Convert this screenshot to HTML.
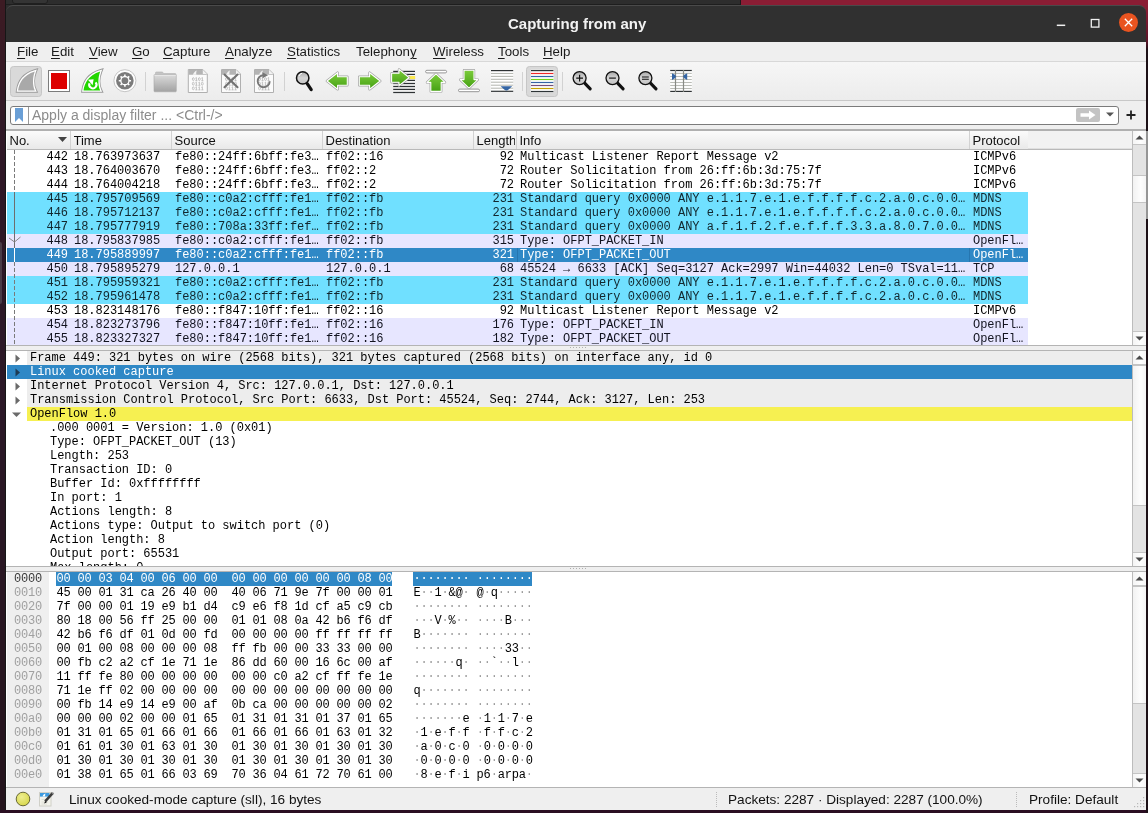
<!DOCTYPE html><html><head><meta charset="utf-8"><style>
*{margin:0;padding:0;box-sizing:border-box}
html,body{width:1148px;height:813px;overflow:hidden;background:#2a1420}
body{position:relative;font-family:"Liberation Sans",sans-serif}
.a{position:absolute}
.mono{font-family:"Liberation Mono",monospace;font-size:12px;white-space:pre;line-height:14px;letter-spacing:-0.02px}
.sans{font-family:"Liberation Sans",sans-serif;white-space:pre}
.row{position:absolute;height:14px;left:0;}
.hx{font-size:12px;letter-spacing:-0.2px}
.cell{position:absolute;top:0;height:14px;overflow:hidden;white-space:pre}
</style></head><body><div style="position:absolute;left:0;top:0;width:1148px;height:813px;will-change:transform"><div class="a" style="left:0;top:0;width:6px;height:813px;background:linear-gradient(#3d1b23,#2f1826 130px,#2b1827 400px,#27151f 700px,#23131c)"></div>
<div class="a" style="left:-3px;top:242px;width:5px;height:62px;border-radius:2px;background:#4a3c47"></div>
<div class="a" style="left:5px;top:0;width:1px;height:813px;background:#161616"></div>
<div class="a" style="left:6px;top:0;width:735px;height:14px;background:#2d2d2d"></div>
<div class="a" style="left:1130px;top:0;width:18px;height:14px;background:#8a1d34"></div>
<div class="a" style="left:741px;top:0;width:407px;height:6px;background:#8a1d34"></div>
<div class="a" style="left:6px;top:4px;width:735px;height:1px;background:#1e1e1e"></div>
<div class="a" style="left:740px;top:0;width:1px;height:5px;background:#1a1a1a"></div>
<div class="a" style="left:12px;top:-4px;width:36px;height:8px;border:1px solid #1f1f1f;border-radius:3px;background:#343434"></div>
<div class="a" style="left:0;top:810px;width:1148px;height:3px;background:#2a0e22"></div>
<div class="a" style="left:1146px;top:6px;width:2px;height:807px;background:linear-gradient(#8a1d34,#5a1428 36px,#1c1016 44px,#1c1016)"></div>
<div class="a" style="left:1146px;top:131px;width:2px;height:88px;background:#959595"></div>
<div class="a" style="left:6px;top:5px;width:1140px;height:37px;background:#303030;border-radius:7px 7px 0 0;border-top:1px solid #4a4a4a"></div>
<div class="a sans" style="left:508px;top:15px;font-size:15px;font-weight:bold;color:#f2f2f2">Capturing from any</div>
<svg class="a" style="left:1050px;top:14px" width="56" height="20"><path d="M6.8,11.3 H15.2" stroke="#f0f0f0" stroke-width="1.5"/><rect x="41.3" y="5.5" width="7.6" height="7.6" fill="none" stroke="#f0f0f0" stroke-width="1.3"/></svg>
<div class="a" style="left:1119.2px;top:13.4px;width:19px;height:19px;border-radius:50%;background:#e95420"></div>
<svg class="a" style="left:1119.2px;top:13.4px" width="19" height="19"><path d="M5.8 5.8 L13.2 13.2 M13.2 5.8 L5.8 13.2" stroke="#fff" stroke-width="1.3"/></svg>
<div class="a" style="left:6px;top:42px;width:1140px;height:768px;background:#efefef"></div>
<div class="a sans" style="left:17px;top:44px;font-size:13.3px;color:#1a1a1a;line-height:15px"><u style="text-decoration:underline;text-decoration-thickness:1px;text-underline-offset:2px">F</u>ile</div>
<div class="a sans" style="left:51px;top:44px;font-size:13.3px;color:#1a1a1a;line-height:15px"><u style="text-decoration:underline;text-decoration-thickness:1px;text-underline-offset:2px">E</u>dit</div>
<div class="a sans" style="left:89px;top:44px;font-size:13.3px;color:#1a1a1a;line-height:15px"><u style="text-decoration:underline;text-decoration-thickness:1px;text-underline-offset:2px">V</u>iew</div>
<div class="a sans" style="left:132px;top:44px;font-size:13.3px;color:#1a1a1a;line-height:15px"><u style="text-decoration:underline;text-decoration-thickness:1px;text-underline-offset:2px">G</u>o</div>
<div class="a sans" style="left:163px;top:44px;font-size:13.3px;color:#1a1a1a;line-height:15px"><u style="text-decoration:underline;text-decoration-thickness:1px;text-underline-offset:2px">C</u>apture</div>
<div class="a sans" style="left:225px;top:44px;font-size:13.3px;color:#1a1a1a;line-height:15px"><u style="text-decoration:underline;text-decoration-thickness:1px;text-underline-offset:2px">A</u>nalyze</div>
<div class="a sans" style="left:287px;top:44px;font-size:13.3px;color:#1a1a1a;line-height:15px"><u style="text-decoration:underline;text-decoration-thickness:1px;text-underline-offset:2px">S</u>tatistics</div>
<div class="a sans" style="left:356px;top:44px;font-size:13.3px;color:#1a1a1a;line-height:15px">Telephon<u style="text-decoration:underline;text-decoration-thickness:1px;text-underline-offset:2px">y</u></div>
<div class="a sans" style="left:433px;top:44px;font-size:13.3px;color:#1a1a1a;line-height:15px"><u style="text-decoration:underline;text-decoration-thickness:1px;text-underline-offset:2px">W</u>ireless</div>
<div class="a sans" style="left:498px;top:44px;font-size:13.3px;color:#1a1a1a;line-height:15px"><u style="text-decoration:underline;text-decoration-thickness:1px;text-underline-offset:2px">T</u>ools</div>
<div class="a sans" style="left:543px;top:44px;font-size:13.3px;color:#1a1a1a;line-height:15px"><u style="text-decoration:underline;text-decoration-thickness:1px;text-underline-offset:2px">H</u>elp</div>
<div class="a" style="left:6px;top:61px;width:1140px;height:1px;background:#d8d8d8"></div>
<div class="a" style="left:6px;top:62px;width:1140px;height:38px;background:linear-gradient(#f6f6f6,#ececec)"></div>
<div class="a" style="left:6px;top:100px;width:1140px;height:1px;background:#c8c8c8"></div>
<svg class="a" style="left:0;top:0" width="1148" height="102" viewBox="0 0 1148 102"><defs><linearGradient id="gA" x1="0" y1="0" x2="0" y2="1"><stop offset="0" stop-color="#7ccc3c"/><stop offset="1" stop-color="#44a012"/></linearGradient><linearGradient id="gF" x1="0" y1="0" x2="0" y2="1"><stop offset="0" stop-color="#dcdcdc"/><stop offset="1" stop-color="#a2a2a2"/></linearGradient><linearGradient id="gL" x1="0" y1="0" x2="0" y2="1"><stop offset="0" stop-color="#a8a8a8"/><stop offset="0.5" stop-color="#d4d4d4"/><stop offset="1" stop-color="#c4c4c4"/></linearGradient><radialGradient id="gR" cx="0.5" cy="0.4" r="0.6"><stop offset="0" stop-color="#fbfbfb"/><stop offset="1" stop-color="#e2e2e2"/></radialGradient></defs><rect x="10.5" y="66.5" width="31" height="30" rx="3" fill="#d9d9d9" stroke="#c6c6c6"/><path d="M18.099999999999994,90.5 C19.099999999999994,83 23.099999999999994,75 34.8,71.4 C32.599999999999994,77 32.19999999999999,85 34.8,90.5 Z" fill="none" stroke="#9c9c9c" stroke-width="4.3" stroke-linejoin="miter" stroke-miterlimit="3"/><path d="M18.099999999999994,90.5 C19.099999999999994,83 23.099999999999994,75 34.8,71.4 C32.599999999999994,77 32.19999999999999,85 34.8,90.5 Z" fill="none" stroke="#ffffff" stroke-width="2.5" stroke-linejoin="miter" stroke-miterlimit="3"/><path d="M18.099999999999994,90.5 C19.099999999999994,83 23.099999999999994,75 34.8,71.4 C32.599999999999994,77 32.19999999999999,85 34.8,90.5 Z" fill="#a9a9a9"/><rect x="48.5" y="70.5" width="21" height="21" fill="#ffffff" stroke="#7c7c7c"/><rect x="51" y="73" width="16" height="16" fill="#dd0000"/><path d="M83.5,90.5 C84.5,83 88.5,75 100.2,71.4 C98,77 97.6,85 100.2,90.5 Z" fill="none" stroke="#9a9a9a" stroke-width="4.3" stroke-linejoin="miter" stroke-miterlimit="3"/><path d="M83.5,90.5 C84.5,83 88.5,75 100.2,71.4 C98,77 97.6,85 100.2,90.5 Z" fill="none" stroke="#ffffff" stroke-width="2.5" stroke-linejoin="miter" stroke-miterlimit="3"/><path d="M83.5,90.5 C84.5,83 88.5,75 100.2,71.4 C98,77 97.6,85 100.2,90.5 Z" fill="#22d600"/><path d="M95.6,82.4 A3.6,3.6 0 1 1 89.6,83.2" fill="none" stroke="#fff" stroke-width="2.1"/><path d="M88,79.8 L93.6,79.2 L92.6,85.2 Z" fill="#fff"/><circle cx="124.9" cy="80.7" r="11" fill="#ffffff" stroke="#bdbdbd" stroke-width="0.9"/><circle cx="124.9" cy="80.7" r="8.8" fill="#7b7b7b"/><path d="M123.10,76.36L124.09,76.07L124.12,74.55L125.68,74.55L125.71,76.07L126.70,76.36L127.60,76.85L128.70,75.80L129.80,76.90L128.75,78.00L129.24,78.90L129.53,79.89L131.05,79.92L131.05,81.48L129.53,81.51L129.24,82.50L128.75,83.40L129.80,84.50L128.70,85.60L127.60,84.55L126.70,85.04L125.71,85.33L125.68,86.85L124.12,86.85L124.09,85.33L123.10,85.04L122.20,84.55L121.10,85.60L120.00,84.50L121.05,83.40L120.56,82.50L120.27,81.51L118.75,81.48L118.75,79.92L120.27,79.89L120.56,78.90L121.05,78.00L120.00,76.90L121.10,75.80L122.20,76.85Z" fill="#ffffff"/><circle cx="124.9" cy="80.7" r="3.4" fill="#7b7b7b"/><line x1="145.5" y1="72" x2="145.5" y2="91" stroke="#d2d2d2"/><line x1="284.5" y1="72" x2="284.5" y2="91" stroke="#d2d2d2"/><line x1="522.5" y1="72" x2="522.5" y2="91" stroke="#d2d2d2"/><line x1="562.5" y1="72" x2="562.5" y2="91" stroke="#d2d2d2"/><path d="M155.5,75 V72.8 Q155.5,72 156.3,72 H162.5 L163.5,73.5 H175 Q176,73.5 176,74.5 V75 Z" fill="#c4c4c4" stroke="#b4b4b4" stroke-width="0.6"/><rect x="154" y="74.5" width="22.3" height="17.3" rx="0.8" fill="url(#gF)" stroke="#a8a8a8" stroke-width="0.6"/><line x1="154.5" y1="75.3" x2="175.8" y2="75.3" stroke="#eeeeee" stroke-width="0.8"/><path d="M188.3,69.5 H202.8 L207.3,74 V92.5 H188.3 Z" fill="#fbfbfb" stroke="#b0b0b0"/><path d="M188.8,70 H202.60000000000002 L206.8,74.2 V74.8 H188.8 Z" fill="#b4b4b4"/><path d="M202.8,70 V74 H206.8" fill="#f2f2f2" stroke="none"/><path d="M192.8,74.8 C193.8,72.5 195.3,71 196.8,70.6 C196.10000000000002,72 196.10000000000002,73.5 196.4,74.8 Z" fill="#f4f4f4"/><ellipse cx="193.3" cy="79.1" rx="0.95" ry="1.45" fill="none" stroke="#b6b6b6" stroke-width="0.8"/><path d="M195.4,78.19999999999999 L196.4,77.5 V80.69999999999999 M195.3,80.69999999999999 H197.4" fill="none" stroke="#b6b6b6" stroke-width="0.8"/><ellipse cx="199.3" cy="79.1" rx="0.95" ry="1.45" fill="none" stroke="#b6b6b6" stroke-width="0.8"/><path d="M201.4,78.19999999999999 L202.4,77.5 V80.69999999999999 M201.3,80.69999999999999 H203.4" fill="none" stroke="#b6b6b6" stroke-width="0.8"/><ellipse cx="193.3" cy="83.7" rx="0.95" ry="1.45" fill="none" stroke="#b6b6b6" stroke-width="0.8"/><path d="M195.4,82.8 L196.4,82.10000000000001 V85.3 M195.3,85.3 H197.4" fill="none" stroke="#b6b6b6" stroke-width="0.8"/><path d="M198.4,82.8 L199.4,82.10000000000001 V85.3 M198.3,85.3 H200.4" fill="none" stroke="#b6b6b6" stroke-width="0.8"/><ellipse cx="202.3" cy="83.7" rx="0.95" ry="1.45" fill="none" stroke="#b6b6b6" stroke-width="0.8"/><ellipse cx="193.3" cy="88.3" rx="0.95" ry="1.45" fill="none" stroke="#b6b6b6" stroke-width="0.8"/><path d="M195.4,87.39999999999999 L196.4,86.7 V89.89999999999999 M195.3,89.89999999999999 H197.4" fill="none" stroke="#b6b6b6" stroke-width="0.8"/><path d="M198.4,87.39999999999999 L199.4,86.7 V89.89999999999999 M198.3,89.89999999999999 H200.4" fill="none" stroke="#b6b6b6" stroke-width="0.8"/><path d="M201.4,87.39999999999999 L202.4,86.7 V89.89999999999999 M201.3,89.89999999999999 H203.4" fill="none" stroke="#b6b6b6" stroke-width="0.8"/><path d="M221.5,69.5 H236 L240.5,74 V92.5 H221.5 Z" fill="#fbfbfb" stroke="#b0b0b0"/><path d="M222,70 H235.8 L240,74.2 V74.8 H222 Z" fill="#b4b4b4"/><path d="M236,70 V74 H240" fill="#f2f2f2" stroke="none"/><path d="M226,74.8 C227,72.5 228.5,71 230,70.6 C229.3,72 229.3,73.5 229.6,74.8 Z" fill="#f4f4f4"/><ellipse cx="226.5" cy="79.1" rx="0.95" ry="1.45" fill="none" stroke="#b6b6b6" stroke-width="0.8"/><path d="M228.6,78.19999999999999 L229.6,77.5 V80.69999999999999 M228.5,80.69999999999999 H230.6" fill="none" stroke="#b6b6b6" stroke-width="0.8"/><ellipse cx="232.5" cy="79.1" rx="0.95" ry="1.45" fill="none" stroke="#b6b6b6" stroke-width="0.8"/><path d="M234.6,78.19999999999999 L235.6,77.5 V80.69999999999999 M234.5,80.69999999999999 H236.6" fill="none" stroke="#b6b6b6" stroke-width="0.8"/><ellipse cx="226.5" cy="83.7" rx="0.95" ry="1.45" fill="none" stroke="#b6b6b6" stroke-width="0.8"/><path d="M228.6,82.8 L229.6,82.10000000000001 V85.3 M228.5,85.3 H230.6" fill="none" stroke="#b6b6b6" stroke-width="0.8"/><path d="M231.6,82.8 L232.6,82.10000000000001 V85.3 M231.5,85.3 H233.6" fill="none" stroke="#b6b6b6" stroke-width="0.8"/><ellipse cx="235.5" cy="83.7" rx="0.95" ry="1.45" fill="none" stroke="#b6b6b6" stroke-width="0.8"/><ellipse cx="226.5" cy="88.3" rx="0.95" ry="1.45" fill="none" stroke="#b6b6b6" stroke-width="0.8"/><path d="M228.6,87.39999999999999 L229.6,86.7 V89.89999999999999 M228.5,89.89999999999999 H230.6" fill="none" stroke="#b6b6b6" stroke-width="0.8"/><path d="M231.6,87.39999999999999 L232.6,86.7 V89.89999999999999 M231.5,89.89999999999999 H233.6" fill="none" stroke="#b6b6b6" stroke-width="0.8"/><path d="M234.6,87.39999999999999 L235.6,86.7 V89.89999999999999 M234.5,89.89999999999999 H236.6" fill="none" stroke="#b6b6b6" stroke-width="0.8"/><path d="M224.5,74.6 L237.5,87.2 M237.5,74.6 L224.5,87.2" stroke="#727272" stroke-width="2.1" stroke-linecap="round"/><path d="M254.5,69.5 H269 L273.5,74 V92.5 H254.5 Z" fill="#fbfbfb" stroke="#b0b0b0"/><path d="M255,70 H268.8 L273,74.2 V74.8 H255 Z" fill="#b4b4b4"/><path d="M269,70 V74 H273" fill="#f2f2f2" stroke="none"/><path d="M259,74.8 C260,72.5 261.5,71 263,70.6 C262.3,72 262.3,73.5 262.6,74.8 Z" fill="#f4f4f4"/><ellipse cx="259.5" cy="79.1" rx="0.95" ry="1.45" fill="none" stroke="#b6b6b6" stroke-width="0.8"/><path d="M261.6,78.19999999999999 L262.6,77.5 V80.69999999999999 M261.5,80.69999999999999 H263.6" fill="none" stroke="#b6b6b6" stroke-width="0.8"/><ellipse cx="265.5" cy="79.1" rx="0.95" ry="1.45" fill="none" stroke="#b6b6b6" stroke-width="0.8"/><path d="M267.6,78.19999999999999 L268.6,77.5 V80.69999999999999 M267.5,80.69999999999999 H269.6" fill="none" stroke="#b6b6b6" stroke-width="0.8"/><ellipse cx="259.5" cy="83.7" rx="0.95" ry="1.45" fill="none" stroke="#b6b6b6" stroke-width="0.8"/><path d="M261.6,82.8 L262.6,82.10000000000001 V85.3 M261.5,85.3 H263.6" fill="none" stroke="#b6b6b6" stroke-width="0.8"/><path d="M264.6,82.8 L265.6,82.10000000000001 V85.3 M264.5,85.3 H266.6" fill="none" stroke="#b6b6b6" stroke-width="0.8"/><ellipse cx="268.5" cy="83.7" rx="0.95" ry="1.45" fill="none" stroke="#b6b6b6" stroke-width="0.8"/><ellipse cx="259.5" cy="88.3" rx="0.95" ry="1.45" fill="none" stroke="#b6b6b6" stroke-width="0.8"/><path d="M261.6,87.39999999999999 L262.6,86.7 V89.89999999999999 M261.5,89.89999999999999 H263.6" fill="none" stroke="#b6b6b6" stroke-width="0.8"/><path d="M264.6,87.39999999999999 L265.6,86.7 V89.89999999999999 M264.5,89.89999999999999 H266.6" fill="none" stroke="#b6b6b6" stroke-width="0.8"/><path d="M267.6,87.39999999999999 L268.6,86.7 V89.89999999999999 M267.5,89.89999999999999 H269.6" fill="none" stroke="#b6b6b6" stroke-width="0.8"/><path d="M269.7,81.2 A6,6 0 1 1 263.2,75.2" fill="none" stroke="#767676" stroke-width="1.9"/><path d="M262.4,72.2 L268,75.2 L262.6,78.2 Z" fill="#767676"/><line x1="307.2" y1="83.6" x2="311.2" y2="89.6" stroke="#111" stroke-width="3.2" stroke-linecap="round"/><circle cx="302.7" cy="77.9" r="6.2" fill="url(#gL)" stroke="#111" stroke-width="1.5"/><path d="M299,76 A4,4 0 0 1 302,73.2" fill="none" stroke="#fff" stroke-width="1"/><path d="M327,81 L337.6,72.7 V76.7 H347.3 V85.3 H337.6 V89.3 Z" fill="none" stroke="#a4a4a4" stroke-width="2.6" stroke-linejoin="round"/><path d="M327,81 L337.6,72.7 V76.7 H347.3 V85.3 H337.6 V89.3 Z" fill="url(#gA)" stroke="#ffffff" stroke-width="1.1" stroke-linejoin="round"/><path d="M380.2,81 L369.59999999999997,72.7 V76.7 H359.3 V85.3 H369.59999999999997 V89.3 Z" fill="none" stroke="#a4a4a4" stroke-width="2.6" stroke-linejoin="round"/><path d="M380.2,81 L369.59999999999997,72.7 V76.7 H359.3 V85.3 H369.59999999999997 V89.3 Z" fill="url(#gA)" stroke="#ffffff" stroke-width="1.1" stroke-linejoin="round"/><line x1="393.2" y1="71.4" x2="415" y2="71.4" stroke="#2e3234" stroke-width="1.2"/><line x1="393.2" y1="74.4" x2="415" y2="74.4" stroke="#2e3234" stroke-width="1.2"/><line x1="393.2" y1="80.4" x2="415" y2="80.4" stroke="#2e3234" stroke-width="1.2"/><line x1="393.2" y1="83.5" x2="415" y2="83.5" stroke="#2e3234" stroke-width="1.2"/><line x1="393.2" y1="86.5" x2="415" y2="86.5" stroke="#2e3234" stroke-width="1.2"/><line x1="393.2" y1="89.4" x2="415" y2="89.4" stroke="#2e3234" stroke-width="1.2"/><line x1="393.2" y1="92.5" x2="415" y2="92.5" stroke="#2e3234" stroke-width="1.2"/><rect x="392.5" y="69.8" width="23" height="23.6" fill="none"/><rect x="404" y="76" width="11.2" height="3" fill="#fce94f"/><path d="M391.6,73.2 H399 V69.4 L409,77.7 L399,85.6 V82.3 H391.6 Z" fill="none" stroke="#a0a0a0" stroke-width="2.4" stroke-linejoin="round"/><path d="M391.6,73.2 H399 V69.4 L409,77.7 L399,85.6 V82.3 H391.6 Z" fill="url(#gA)" stroke="#ffffff" stroke-width="1.1" stroke-linejoin="round"/><rect x="425.6" y="70.3" width="21" height="2.6" rx="1.3" fill="#fff" stroke="#8a8a8a" stroke-width="0.9"/><path d="M436,73.8 L445,82.4 H441.2 V91.4 H430.8 V82.4 H427 Z" fill="none" stroke="#a0a0a0" stroke-width="2.4" stroke-linejoin="round"/><path d="M436,73.8 L445,82.4 H441.2 V91.4 H430.8 V82.4 H427 Z" fill="url(#gA)" stroke="#fff" stroke-width="1.1" stroke-linejoin="round"/><path d="M469,88.2 L477.8,79.6 H474 V70.2 H464 V79.6 H460.2 Z" fill="none" stroke="#a0a0a0" stroke-width="2.4" stroke-linejoin="round"/><path d="M469,88.2 L477.8,79.6 H474 V70.2 H464 V79.6 H460.2 Z" fill="url(#gA)" stroke="#fff" stroke-width="1.1" stroke-linejoin="round"/><rect x="458.5" y="89.1" width="21" height="2.6" rx="1.3" fill="#fff" stroke="#8a8a8a" stroke-width="0.9"/><rect x="490.8" y="70" width="22.4" height="22" fill="#ffffff"/><line x1="491" y1="70.6" x2="513.2" y2="70.6" stroke="#2e3234" stroke-width="1.2"/><line x1="491" y1="73.5" x2="513.2" y2="73.5" stroke="#b8bab4" stroke-width="1.1"/><line x1="491" y1="76.4" x2="513.2" y2="76.4" stroke="#b8bab4" stroke-width="1.1"/><line x1="491" y1="79.3" x2="513.2" y2="79.3" stroke="#b8bab4" stroke-width="1.1"/><line x1="491" y1="82.2" x2="513.2" y2="82.2" stroke="#b8bab4" stroke-width="1.1"/><line x1="491" y1="85.2" x2="513.2" y2="85.2" stroke="#b8bab4" stroke-width="1.1"/><line x1="491" y1="88.2" x2="513.2" y2="88.2" stroke="#b8bab4" stroke-width="1.1"/><line x1="491" y1="91.3" x2="513.2" y2="91.3" stroke="#2e3234" stroke-width="1.2"/><path d="M500.6,86.2 H512.2 L508.6,89.6 Q506.4,91.6 504.2,89.6 Z" fill="#3465a4"/><rect x="526.5" y="66.5" width="31" height="30" rx="3" fill="#d9d9d9" stroke="#c6c6c6"/><rect x="530.8" y="69.8" width="22.8" height="22.4" fill="#fff"/><line x1="531" y1="70.6" x2="553.4" y2="70.6" stroke="#2e3436" stroke-width="1.2"/><line x1="531" y1="73.5" x2="553.4" y2="73.5" stroke="#ef2929" stroke-width="1.2"/><line x1="531" y1="76.5" x2="553.4" y2="76.5" stroke="#3465a4" stroke-width="1.2"/><line x1="531" y1="79.5" x2="553.4" y2="79.5" stroke="#73d216" stroke-width="1.2"/><line x1="531" y1="82.5" x2="553.4" y2="82.5" stroke="#3465a4" stroke-width="1.2"/><line x1="531" y1="85.5" x2="553.4" y2="85.5" stroke="#75507b" stroke-width="1.2"/><line x1="531" y1="88.5" x2="553.4" y2="88.5" stroke="#c4a000" stroke-width="1.2"/><line x1="531" y1="91.5" x2="553.4" y2="91.5" stroke="#2e3436" stroke-width="1.2"/><line x1="584.2" y1="82.69999999999999" x2="590.2" y2="88.89999999999999" stroke="#111" stroke-width="3.1" stroke-linecap="round"/><circle cx="579.6" cy="78.1" r="6.5" fill="url(#gL)" stroke="#111" stroke-width="1.3"/><path d="M576.2,78.1 H583.0 M579.6,74.69999999999999 V81.5" stroke="#111" stroke-width="1.15"/><line x1="617.1" y1="82.69999999999999" x2="623.1" y2="88.89999999999999" stroke="#111" stroke-width="3.1" stroke-linecap="round"/><circle cx="612.5" cy="78.1" r="6.5" fill="url(#gL)" stroke="#111" stroke-width="1.3"/><path d="M609.1,78.1 H615.9" stroke="#111" stroke-width="1.15"/><line x1="650.0" y1="82.69999999999999" x2="656.0" y2="88.89999999999999" stroke="#111" stroke-width="3.1" stroke-linecap="round"/><circle cx="645.4" cy="78.1" r="6.5" fill="url(#gL)" stroke="#111" stroke-width="1.3"/><path d="M642.0,77 H648.8 M642.0,79.3 H648.8" stroke="#111" stroke-width="1.05"/><rect x="670" y="70" width="22" height="22" fill="#ffffff"/><line x1="670.2" y1="73.4" x2="691.8" y2="73.4" stroke="#babcb6" stroke-width="1.1"/><line x1="670.2" y1="76.5" x2="691.8" y2="76.5" stroke="#babcb6" stroke-width="1.1"/><line x1="670.2" y1="79.5" x2="691.8" y2="79.5" stroke="#babcb6" stroke-width="1.1"/><line x1="670.2" y1="82.5" x2="691.8" y2="82.5" stroke="#babcb6" stroke-width="1.1"/><line x1="670.2" y1="85.5" x2="691.8" y2="85.5" stroke="#babcb6" stroke-width="1.1"/><line x1="670.2" y1="88.5" x2="691.8" y2="88.5" stroke="#babcb6" stroke-width="1.1"/><line x1="670.2" y1="70.5" x2="691.8" y2="70.5" stroke="#2e3234" stroke-width="1.2"/><line x1="670.2" y1="91.4" x2="691.8" y2="91.4" stroke="#2e3234" stroke-width="1.2"/><line x1="675.5" y1="70" x2="675.5" y2="92" stroke="#888a85" stroke-width="1.2"/><line x1="683.5" y1="70" x2="683.5" y2="92" stroke="#888a85" stroke-width="1.2"/><path d="M672,73.2 Q675.5,74.5 676.2,76.6 Q675.5,78.6 672,80 Z" fill="#3465a4"/><path d="M687.2,73.2 Q683.7,74.5 683,76.6 Q683.7,78.6 687.2,80 Z" fill="#3465a4"/></svg>
<div class="a" style="left:10px;top:106px;width:1109px;height:19px;background:#fff;border:1px solid #7b7b7b;border-radius:3px"></div>
<div class="a" style="left:28px;top:107px;width:1px;height:17px;background:#9a9a9a"></div>
<svg class="a" style="left:15px;top:108px" width="9" height="14"><path d="M0 0H8V14L4 10L0 14Z" fill="#6a9fd6"/></svg>
<div class="a sans" style="left:32px;top:107px;font-size:14px;color:#8c8c8c;line-height:16px">Apply a display filter ... &lt;Ctrl-/&gt;</div>
<div class="a" style="left:1076px;top:108px;width:24px;height:14px;background:#c3c3c3;border-radius:2px"></div>
<svg class="a" style="left:1078px;top:109px" width="20" height="12"><path d="M2.5,4.2 H11 V1.5 L17.5,6 L11,10.5 V7.8 H2.5 Z" fill="#fff"/></svg>
<svg class="a" style="left:1106px;top:112px" width="9" height="6"><path d="M0,0.5 H8 L4,4.5 Z" fill="#555"/></svg>
<svg class="a" style="left:1125px;top:109px" width="12" height="12"><path d="M6,1.5 V10.5 M1.5,6 H10.5" stroke="#222" stroke-width="1.8"/></svg>
<div class="a" style="left:6px;top:130px;width:1140px;height:216px;background:#fff"></div>
<div class="a" style="left:6px;top:129px;width:1140px;height:2px;background:#b0b0b0"></div>
<div class="a" style="left:7px;top:131px;width:1125px;height:19px;background:linear-gradient(#fbfbfb,#e9e9e9);border-bottom:1px solid #b9b9b9"></div>
<div class="a" style="left:70px;top:131px;width:1px;height:18px;background:#d2d2d2"></div>
<div class="a sans" style="left:9.5px;top:133px;width:59.5px;overflow:hidden;font-size:13px;line-height:15px;color:#111">No.</div>
<div class="a" style="left:171px;top:131px;width:1px;height:18px;background:#d2d2d2"></div>
<div class="a sans" style="left:73.5px;top:133px;width:96.5px;overflow:hidden;font-size:13px;line-height:15px;color:#111">Time</div>
<div class="a" style="left:322px;top:131px;width:1px;height:18px;background:#d2d2d2"></div>
<div class="a sans" style="left:174.5px;top:133px;width:146.5px;overflow:hidden;font-size:13px;line-height:15px;color:#111">Source</div>
<div class="a" style="left:473px;top:131px;width:1px;height:18px;background:#d2d2d2"></div>
<div class="a sans" style="left:325.5px;top:133px;width:146.5px;overflow:hidden;font-size:13px;line-height:15px;color:#111">Destination</div>
<div class="a" style="left:516px;top:131px;width:1px;height:18px;background:#d2d2d2"></div>
<div class="a sans" style="left:476.5px;top:133px;width:38.5px;overflow:hidden;font-size:13px;line-height:15px;color:#111">Length</div>
<div class="a" style="left:969px;top:131px;width:1px;height:18px;background:#d2d2d2"></div>
<div class="a sans" style="left:519.5px;top:133px;width:448.5px;overflow:hidden;font-size:13px;line-height:15px;color:#111">Info</div>
<div class="a" style="left:1028px;top:131px;width:1px;height:18px;background:#d2d2d2"></div>
<div class="a sans" style="left:972.5px;top:133px;width:54.5px;overflow:hidden;font-size:13px;line-height:15px;color:#111">Protocol</div>
<svg class="a" style="left:58px;top:137px" width="9" height="5"><path d="M0 0H9L4.5 5Z" fill="#444"/></svg>
<div class="a" style="left:1028px;top:131px;width:104px;height:18px;background:#f2f2f2;border-bottom:1px solid #e0e0e0"></div>
<div class="a" style="left:7px;top:150px;width:1021px;height:14px;background:#ffffff"></div>
<div class="a mono" style="left:7px;top:150px;width:61px;text-align:right;color:#000000">442</div>
<div class="a mono" style="left:74px;top:150px;color:#000000">18.763973637</div>
<div class="a mono" style="left:175px;top:150px;color:#000000">fe80::24ff:6bff:fe3…</div>
<div class="a mono" style="left:326px;top:150px;color:#000000">ff02::16</div>
<div class="a mono" style="left:474px;top:150px;width:40px;text-align:right;color:#000000">92</div>
<div class="a mono" style="left:520px;top:150px;color:#000000">Multicast Listener Report Message v2</div>
<div class="a mono" style="left:973px;top:150px;color:#000000">ICMPv6</div>
<div class="a" style="left:7px;top:164px;width:1021px;height:14px;background:#ffffff"></div>
<div class="a mono" style="left:7px;top:164px;width:61px;text-align:right;color:#000000">443</div>
<div class="a mono" style="left:74px;top:164px;color:#000000">18.764003670</div>
<div class="a mono" style="left:175px;top:164px;color:#000000">fe80::24ff:6bff:fe3…</div>
<div class="a mono" style="left:326px;top:164px;color:#000000">ff02::2</div>
<div class="a mono" style="left:474px;top:164px;width:40px;text-align:right;color:#000000">72</div>
<div class="a mono" style="left:520px;top:164px;color:#000000">Router Solicitation from 26:ff:6b:3d:75:7f</div>
<div class="a mono" style="left:973px;top:164px;color:#000000">ICMPv6</div>
<div class="a" style="left:7px;top:178px;width:1021px;height:14px;background:#ffffff"></div>
<div class="a mono" style="left:7px;top:178px;width:61px;text-align:right;color:#000000">444</div>
<div class="a mono" style="left:74px;top:178px;color:#000000">18.764004218</div>
<div class="a mono" style="left:175px;top:178px;color:#000000">fe80::24ff:6bff:fe3…</div>
<div class="a mono" style="left:326px;top:178px;color:#000000">ff02::2</div>
<div class="a mono" style="left:474px;top:178px;width:40px;text-align:right;color:#000000">72</div>
<div class="a mono" style="left:520px;top:178px;color:#000000">Router Solicitation from 26:ff:6b:3d:75:7f</div>
<div class="a mono" style="left:973px;top:178px;color:#000000">ICMPv6</div>
<div class="a" style="left:7px;top:192px;width:1021px;height:14px;background:#70e0ff"></div>
<div class="a mono" style="left:7px;top:192px;width:61px;text-align:right;color:#12272e">445</div>
<div class="a mono" style="left:74px;top:192px;color:#12272e">18.795709569</div>
<div class="a mono" style="left:175px;top:192px;color:#12272e">fe80::c0a2:cfff:fe1…</div>
<div class="a mono" style="left:326px;top:192px;color:#12272e">ff02::fb</div>
<div class="a mono" style="left:474px;top:192px;width:40px;text-align:right;color:#12272e">231</div>
<div class="a mono" style="left:520px;top:192px;color:#12272e">Standard query 0x0000 ANY e.1.1.7.e.1.e.f.f.f.f.c.2.a.0.c.0.0…</div>
<div class="a mono" style="left:973px;top:192px;color:#12272e">MDNS</div>
<div class="a" style="left:7px;top:206px;width:1021px;height:14px;background:#70e0ff"></div>
<div class="a mono" style="left:7px;top:206px;width:61px;text-align:right;color:#12272e">446</div>
<div class="a mono" style="left:74px;top:206px;color:#12272e">18.795712137</div>
<div class="a mono" style="left:175px;top:206px;color:#12272e">fe80::c0a2:cfff:fe1…</div>
<div class="a mono" style="left:326px;top:206px;color:#12272e">ff02::fb</div>
<div class="a mono" style="left:474px;top:206px;width:40px;text-align:right;color:#12272e">231</div>
<div class="a mono" style="left:520px;top:206px;color:#12272e">Standard query 0x0000 ANY e.1.1.7.e.1.e.f.f.f.f.c.2.a.0.c.0.0…</div>
<div class="a mono" style="left:973px;top:206px;color:#12272e">MDNS</div>
<div class="a" style="left:7px;top:220px;width:1021px;height:14px;background:#70e0ff"></div>
<div class="a mono" style="left:7px;top:220px;width:61px;text-align:right;color:#12272e">447</div>
<div class="a mono" style="left:74px;top:220px;color:#12272e">18.795777919</div>
<div class="a mono" style="left:175px;top:220px;color:#12272e">fe80::708a:33ff:fef…</div>
<div class="a mono" style="left:326px;top:220px;color:#12272e">ff02::fb</div>
<div class="a mono" style="left:474px;top:220px;width:40px;text-align:right;color:#12272e">231</div>
<div class="a mono" style="left:520px;top:220px;color:#12272e">Standard query 0x0000 ANY a.f.1.f.2.f.e.f.f.f.3.3.a.8.0.7.0.0…</div>
<div class="a mono" style="left:973px;top:220px;color:#12272e">MDNS</div>
<div class="a" style="left:7px;top:234px;width:1021px;height:14px;background:#e7e6ff"></div>
<div class="a mono" style="left:7px;top:234px;width:61px;text-align:right;color:#12131f">448</div>
<div class="a mono" style="left:74px;top:234px;color:#12131f">18.795837985</div>
<div class="a mono" style="left:175px;top:234px;color:#12131f">fe80::c0a2:cfff:fe1…</div>
<div class="a mono" style="left:326px;top:234px;color:#12131f">ff02::fb</div>
<div class="a mono" style="left:474px;top:234px;width:40px;text-align:right;color:#12131f">315</div>
<div class="a mono" style="left:520px;top:234px;color:#12131f">Type: OFPT_PACKET_IN</div>
<div class="a mono" style="left:973px;top:234px;color:#12131f">OpenFl…</div>
<div class="a" style="left:7px;top:248px;width:1021px;height:14px;background:#2f88c6"></div>
<div class="a mono" style="left:7px;top:248px;width:61px;text-align:right;color:#ffffff">449</div>
<div class="a mono" style="left:74px;top:248px;color:#ffffff">18.795889997</div>
<div class="a mono" style="left:175px;top:248px;color:#ffffff">fe80::c0a2:cfff:fe1…</div>
<div class="a mono" style="left:326px;top:248px;color:#ffffff">ff02::fb</div>
<div class="a mono" style="left:474px;top:248px;width:40px;text-align:right;color:#ffffff">321</div>
<div class="a mono" style="left:520px;top:248px;color:#ffffff">Type: OFPT_PACKET_OUT</div>
<div class="a mono" style="left:973px;top:248px;color:#ffffff">OpenFl…</div>
<div class="a" style="left:7px;top:262px;width:1021px;height:14px;background:#e7e6ff"></div>
<div class="a mono" style="left:7px;top:262px;width:61px;text-align:right;color:#12131f">450</div>
<div class="a mono" style="left:74px;top:262px;color:#12131f">18.795895279</div>
<div class="a mono" style="left:175px;top:262px;color:#12131f">127.0.0.1</div>
<div class="a mono" style="left:326px;top:262px;color:#12131f">127.0.0.1</div>
<div class="a mono" style="left:474px;top:262px;width:40px;text-align:right;color:#12131f">68</div>
<div class="a mono" style="left:520px;top:262px;color:#12131f">45524 → 6633 [ACK] Seq=3127 Ack=2997 Win=44032 Len=0 TSval=11…</div>
<div class="a mono" style="left:973px;top:262px;color:#12131f">TCP</div>
<div class="a" style="left:7px;top:276px;width:1021px;height:14px;background:#70e0ff"></div>
<div class="a mono" style="left:7px;top:276px;width:61px;text-align:right;color:#12272e">451</div>
<div class="a mono" style="left:74px;top:276px;color:#12272e">18.795959321</div>
<div class="a mono" style="left:175px;top:276px;color:#12272e">fe80::c0a2:cfff:fe1…</div>
<div class="a mono" style="left:326px;top:276px;color:#12272e">ff02::fb</div>
<div class="a mono" style="left:474px;top:276px;width:40px;text-align:right;color:#12272e">231</div>
<div class="a mono" style="left:520px;top:276px;color:#12272e">Standard query 0x0000 ANY e.1.1.7.e.1.e.f.f.f.f.c.2.a.0.c.0.0…</div>
<div class="a mono" style="left:973px;top:276px;color:#12272e">MDNS</div>
<div class="a" style="left:7px;top:290px;width:1021px;height:14px;background:#70e0ff"></div>
<div class="a mono" style="left:7px;top:290px;width:61px;text-align:right;color:#12272e">452</div>
<div class="a mono" style="left:74px;top:290px;color:#12272e">18.795961478</div>
<div class="a mono" style="left:175px;top:290px;color:#12272e">fe80::c0a2:cfff:fe1…</div>
<div class="a mono" style="left:326px;top:290px;color:#12272e">ff02::fb</div>
<div class="a mono" style="left:474px;top:290px;width:40px;text-align:right;color:#12272e">231</div>
<div class="a mono" style="left:520px;top:290px;color:#12272e">Standard query 0x0000 ANY e.1.1.7.e.1.e.f.f.f.f.c.2.a.0.c.0.0…</div>
<div class="a mono" style="left:973px;top:290px;color:#12272e">MDNS</div>
<div class="a" style="left:7px;top:304px;width:1021px;height:14px;background:#ffffff"></div>
<div class="a mono" style="left:7px;top:304px;width:61px;text-align:right;color:#000000">453</div>
<div class="a mono" style="left:74px;top:304px;color:#000000">18.823148176</div>
<div class="a mono" style="left:175px;top:304px;color:#000000">fe80::f847:10ff:fe1…</div>
<div class="a mono" style="left:326px;top:304px;color:#000000">ff02::16</div>
<div class="a mono" style="left:474px;top:304px;width:40px;text-align:right;color:#000000">92</div>
<div class="a mono" style="left:520px;top:304px;color:#000000">Multicast Listener Report Message v2</div>
<div class="a mono" style="left:973px;top:304px;color:#000000">ICMPv6</div>
<div class="a" style="left:7px;top:318px;width:1021px;height:14px;background:#e7e6ff"></div>
<div class="a mono" style="left:7px;top:318px;width:61px;text-align:right;color:#12131f">454</div>
<div class="a mono" style="left:74px;top:318px;color:#12131f">18.823273796</div>
<div class="a mono" style="left:175px;top:318px;color:#12131f">fe80::f847:10ff:fe1…</div>
<div class="a mono" style="left:326px;top:318px;color:#12131f">ff02::16</div>
<div class="a mono" style="left:474px;top:318px;width:40px;text-align:right;color:#12131f">176</div>
<div class="a mono" style="left:520px;top:318px;color:#12131f">Type: OFPT_PACKET_IN</div>
<div class="a mono" style="left:973px;top:318px;color:#12131f">OpenFl…</div>
<div class="a" style="left:7px;top:332px;width:1021px;height:14px;background:#e7e6ff"></div>
<div class="a mono" style="left:7px;top:332px;width:61px;text-align:right;color:#12131f">455</div>
<div class="a mono" style="left:74px;top:332px;color:#12131f">18.823327327</div>
<div class="a mono" style="left:175px;top:332px;color:#12131f">fe80::f847:10ff:fe1…</div>
<div class="a mono" style="left:326px;top:332px;color:#12131f">ff02::16</div>
<div class="a mono" style="left:474px;top:332px;width:40px;text-align:right;color:#12131f">182</div>
<div class="a mono" style="left:520px;top:332px;color:#12131f">Type: OFPT_PACKET_OUT</div>
<div class="a mono" style="left:973px;top:332px;color:#12131f">OpenFl…</div>
<div class="a" style="left:517px;top:248px;width:453px;height:14px;border-left:1px solid #2676b0;border-right:1px solid #2676b0"></div>
<div class="a" style="left:14px;top:150px;width:1px;height:42px;background:repeating-linear-gradient(#7a7a7a 0 4px,transparent 4px 6px)"></div>
<div class="a" style="left:14px;top:192px;width:1px;height:56px;background:#6e6e6e"></div>
<div class="a" style="left:14px;top:262px;width:1px;height:83px;background:repeating-linear-gradient(#7a7a7a 0 4px,transparent 4px 6px)"></div>
<div class="a" style="left:14px;top:248px;width:1px;height:14px;background:#fff"></div>
<svg class="a" style="left:8px;top:236px" width="14" height="8"><path d="M1 2 L6.5 6 L12.5 1" stroke="#888" stroke-width="1" fill="none"/></svg>
<div class="a" style="left:6px;top:345px;width:1140px;height:1px;background:#b4b4b4"></div>
<div class="a" style="left:1132px;top:131px;width:1px;height:214px;background:#bcbcbc"></div>
<div class="a" style="left:1133px;top:131px;width:13px;height:214px;background:#e3e3e3"></div>
<div class="a" style="left:1133px;top:175px;width:13px;height:28px;background:linear-gradient(90deg,#f2f2f2,#fdfdfd 60%,#f4f4f4);border-top:1px solid #c4c4c4;border-bottom:1px solid #c4c4c4"></div>
<div class="a" style="left:1133px;top:131px;width:13px;height:14px;background:linear-gradient(90deg,#f4f4f4,#fefefe 60%,#f6f6f6);border-bottom:1px solid #c4c4c4"></div>
<svg class="a" style="left:1135px;top:135px" width="9" height="5"><path d="M0.5 4.5H8.5L4.5 0.5Z" fill="#4a4a4a"/></svg>
<div class="a" style="left:1133px;top:331px;width:13px;height:14px;background:linear-gradient(90deg,#f4f4f4,#fefefe 60%,#f6f6f6);border-top:1px solid #c4c4c4"></div>
<svg class="a" style="left:1135px;top:336px" width="9" height="5"><path d="M0.5 0.5H8.5L4.5 4.5Z" fill="#4a4a4a"/></svg>
<div class="a" style="left:6px;top:350px;width:1140px;height:217px;background:#fff;border-top:1px solid #b4b4b4;border-bottom:1px solid #b4b4b4"></div>
<div class="a" style="left:27px;top:351px;width:1105px;height:14px;background:#ededed"></div>
<div class="a mono" style="left:30px;top:351px;color:#000000">Frame 449: 321 bytes on wire (2568 bits), 321 bytes captured (2568 bits) on interface any, id 0</div>
<svg class="a" style="left:15px;top:354px" width="6" height="9"><path d="M0.5 0.5L5 4.5L0.5 8.5Z" fill="#6a6a6a"/></svg>
<div class="a" style="left:7px;top:365px;width:1125px;height:14px;background:#2f88c6"></div>
<div class="a mono" style="left:30px;top:365px;color:#ffffff">Linux cooked capture</div>
<svg class="a" style="left:15px;top:368px" width="6" height="9"><path d="M0.5 0.5L5 4.5L0.5 8.5Z" fill="#1d3b55"/></svg>
<div class="a" style="left:27px;top:379px;width:1105px;height:14px;background:#ededed"></div>
<div class="a mono" style="left:30px;top:379px;color:#000000">Internet Protocol Version 4, Src: 127.0.0.1, Dst: 127.0.0.1</div>
<svg class="a" style="left:15px;top:382px" width="6" height="9"><path d="M0.5 0.5L5 4.5L0.5 8.5Z" fill="#6a6a6a"/></svg>
<div class="a" style="left:27px;top:393px;width:1105px;height:14px;background:#ededed"></div>
<div class="a mono" style="left:30px;top:393px;color:#000000">Transmission Control Protocol, Src Port: 6633, Dst Port: 45524, Seq: 2744, Ack: 3127, Len: 253</div>
<svg class="a" style="left:15px;top:396px" width="6" height="9"><path d="M0.5 0.5L5 4.5L0.5 8.5Z" fill="#6a6a6a"/></svg>
<div class="a" style="left:27px;top:407px;width:1105px;height:14px;background:#f6f051"></div>
<div class="a mono" style="left:30px;top:407px;color:#000000">OpenFlow 1.0</div>
<svg class="a" style="left:12px;top:412px" width="9" height="6"><path d="M0 0.5H9L4.5 5Z" fill="#6a6a6a"/></svg>
<div class="a mono" style="left:50px;top:421px;color:#000000">.000 0001 = Version: 1.0 (0x01)</div>
<div class="a mono" style="left:50px;top:435px;color:#000000">Type: OFPT_PACKET_OUT (13)</div>
<div class="a mono" style="left:50px;top:449px;color:#000000">Length: 253</div>
<div class="a mono" style="left:50px;top:463px;color:#000000">Transaction ID: 0</div>
<div class="a mono" style="left:50px;top:477px;color:#000000">Buffer Id: 0xffffffff</div>
<div class="a mono" style="left:50px;top:491px;color:#000000">In port: 1</div>
<div class="a mono" style="left:50px;top:505px;color:#000000">Actions length: 8</div>
<div class="a mono" style="left:50px;top:519px;color:#000000">Actions type: Output to switch port (0)</div>
<div class="a mono" style="left:50px;top:533px;color:#000000">Action length: 8</div>
<div class="a mono" style="left:50px;top:547px;color:#000000">Output port: 65531</div>
<div class="a mono" style="left:50px;top:561px;color:#000000">Max length: 0</div>
<div class="a" style="left:6px;top:566px;width:1140px;height:5px;background:#efefef;border-top:1px solid #b4b4b4"></div>
<div class="a" style="left:1132px;top:351px;width:1px;height:215px;background:#bcbcbc"></div>
<div class="a" style="left:1133px;top:351px;width:13px;height:215px;background:#e3e3e3"></div>
<div class="a" style="left:1133px;top:365px;width:13px;height:141px;background:linear-gradient(90deg,#f2f2f2,#fdfdfd 60%,#f4f4f4);border-top:1px solid #c4c4c4;border-bottom:1px solid #c4c4c4"></div>
<div class="a" style="left:1133px;top:351px;width:13px;height:14px;background:linear-gradient(90deg,#f4f4f4,#fefefe 60%,#f6f6f6);border-bottom:1px solid #c4c4c4"></div>
<svg class="a" style="left:1135px;top:355px" width="9" height="5"><path d="M0.5 4.5H8.5L4.5 0.5Z" fill="#4a4a4a"/></svg>
<div class="a" style="left:1133px;top:552px;width:13px;height:14px;background:linear-gradient(90deg,#f4f4f4,#fefefe 60%,#f6f6f6);border-top:1px solid #c4c4c4"></div>
<svg class="a" style="left:1135px;top:557px" width="9" height="5"><path d="M0.5 0.5H8.5L4.5 4.5Z" fill="#4a4a4a"/></svg>
<div class="a" style="left:6px;top:571px;width:1140px;height:217px;background:#fff;border-top:1px solid #b4b4b4;border-bottom:1px solid #b4b4b4"></div>
<div class="a" style="left:7px;top:572px;width:42px;height:215px;background:#efefef"></div>
<div class="a mono hx" style="left:14px;top:572px;color:#3a3a3a">0000</div>
<div class="a" style="left:56px;top:572px;width:336px;height:14px;background:#2f88c6"></div>
<div class="a" style="left:413px;top:572px;width:119px;height:14px;background:#2f88c6"></div>
<div class="a mono hx" style="left:56.5px;top:572px;color:#ffffff">00 00 03 04 00 06 00 00  00 00 00 00 00 00 08 00</div>
<div class="a mono hx" style="left:413.5px;top:572px;color:#ffffff"><span style="color:#ffffff">·</span><span style="color:#ffffff">·</span><span style="color:#ffffff">·</span><span style="color:#ffffff">·</span><span style="color:#ffffff">·</span><span style="color:#ffffff">·</span><span style="color:#ffffff">·</span><span style="color:#ffffff">·</span> <span style="color:#ffffff">·</span><span style="color:#ffffff">·</span><span style="color:#ffffff">·</span><span style="color:#ffffff">·</span><span style="color:#ffffff">·</span><span style="color:#ffffff">·</span><span style="color:#ffffff">·</span><span style="color:#ffffff">·</span></div>
<div class="a mono hx" style="left:14px;top:586px;color:#a0a0a0">0010</div>
<div class="a mono hx" style="left:56.5px;top:586px;color:#000000">45 00 01 31 ca 26 40 00  40 06 71 9e 7f 00 00 01</div>
<div class="a mono hx" style="left:413.5px;top:586px;color:#000000">E<span style="color:#9c9c9c">·</span><span style="color:#9c9c9c">·</span>1<span style="color:#9c9c9c">·</span>&@<span style="color:#9c9c9c">·</span> @<span style="color:#9c9c9c">·</span>q<span style="color:#9c9c9c">·</span><span style="color:#9c9c9c">·</span><span style="color:#9c9c9c">·</span><span style="color:#9c9c9c">·</span><span style="color:#9c9c9c">·</span></div>
<div class="a mono hx" style="left:14px;top:600px;color:#a0a0a0">0020</div>
<div class="a mono hx" style="left:56.5px;top:600px;color:#000000">7f 00 00 01 19 e9 b1 d4  c9 e6 f8 1d cf a5 c9 cb</div>
<div class="a mono hx" style="left:413.5px;top:600px;color:#000000"><span style="color:#9c9c9c">·</span><span style="color:#9c9c9c">·</span><span style="color:#9c9c9c">·</span><span style="color:#9c9c9c">·</span><span style="color:#9c9c9c">·</span><span style="color:#9c9c9c">·</span><span style="color:#9c9c9c">·</span><span style="color:#9c9c9c">·</span> <span style="color:#9c9c9c">·</span><span style="color:#9c9c9c">·</span><span style="color:#9c9c9c">·</span><span style="color:#9c9c9c">·</span><span style="color:#9c9c9c">·</span><span style="color:#9c9c9c">·</span><span style="color:#9c9c9c">·</span><span style="color:#9c9c9c">·</span></div>
<div class="a mono hx" style="left:14px;top:614px;color:#a0a0a0">0030</div>
<div class="a mono hx" style="left:56.5px;top:614px;color:#000000">80 18 00 56 ff 25 00 00  01 01 08 0a 42 b6 f6 df</div>
<div class="a mono hx" style="left:413.5px;top:614px;color:#000000"><span style="color:#9c9c9c">·</span><span style="color:#9c9c9c">·</span><span style="color:#9c9c9c">·</span>V<span style="color:#9c9c9c">·</span>%<span style="color:#9c9c9c">·</span><span style="color:#9c9c9c">·</span> <span style="color:#9c9c9c">·</span><span style="color:#9c9c9c">·</span><span style="color:#9c9c9c">·</span><span style="color:#9c9c9c">·</span>B<span style="color:#9c9c9c">·</span><span style="color:#9c9c9c">·</span><span style="color:#9c9c9c">·</span></div>
<div class="a mono hx" style="left:14px;top:628px;color:#a0a0a0">0040</div>
<div class="a mono hx" style="left:56.5px;top:628px;color:#000000">42 b6 f6 df 01 0d 00 fd  00 00 00 00 ff ff ff ff</div>
<div class="a mono hx" style="left:413.5px;top:628px;color:#000000">B<span style="color:#9c9c9c">·</span><span style="color:#9c9c9c">·</span><span style="color:#9c9c9c">·</span><span style="color:#9c9c9c">·</span><span style="color:#9c9c9c">·</span><span style="color:#9c9c9c">·</span><span style="color:#9c9c9c">·</span> <span style="color:#9c9c9c">·</span><span style="color:#9c9c9c">·</span><span style="color:#9c9c9c">·</span><span style="color:#9c9c9c">·</span><span style="color:#9c9c9c">·</span><span style="color:#9c9c9c">·</span><span style="color:#9c9c9c">·</span><span style="color:#9c9c9c">·</span></div>
<div class="a mono hx" style="left:14px;top:642px;color:#a0a0a0">0050</div>
<div class="a mono hx" style="left:56.5px;top:642px;color:#000000">00 01 00 08 00 00 00 08  ff fb 00 00 33 33 00 00</div>
<div class="a mono hx" style="left:413.5px;top:642px;color:#000000"><span style="color:#9c9c9c">·</span><span style="color:#9c9c9c">·</span><span style="color:#9c9c9c">·</span><span style="color:#9c9c9c">·</span><span style="color:#9c9c9c">·</span><span style="color:#9c9c9c">·</span><span style="color:#9c9c9c">·</span><span style="color:#9c9c9c">·</span> <span style="color:#9c9c9c">·</span><span style="color:#9c9c9c">·</span><span style="color:#9c9c9c">·</span><span style="color:#9c9c9c">·</span>33<span style="color:#9c9c9c">·</span><span style="color:#9c9c9c">·</span></div>
<div class="a mono hx" style="left:14px;top:656px;color:#a0a0a0">0060</div>
<div class="a mono hx" style="left:56.5px;top:656px;color:#000000">00 fb c2 a2 cf 1e 71 1e  86 dd 60 00 16 6c 00 af</div>
<div class="a mono hx" style="left:413.5px;top:656px;color:#000000"><span style="color:#9c9c9c">·</span><span style="color:#9c9c9c">·</span><span style="color:#9c9c9c">·</span><span style="color:#9c9c9c">·</span><span style="color:#9c9c9c">·</span><span style="color:#9c9c9c">·</span>q<span style="color:#9c9c9c">·</span> <span style="color:#9c9c9c">·</span><span style="color:#9c9c9c">·</span>`<span style="color:#9c9c9c">·</span><span style="color:#9c9c9c">·</span>l<span style="color:#9c9c9c">·</span><span style="color:#9c9c9c">·</span></div>
<div class="a mono hx" style="left:14px;top:670px;color:#a0a0a0">0070</div>
<div class="a mono hx" style="left:56.5px;top:670px;color:#000000">11 ff fe 80 00 00 00 00  00 00 c0 a2 cf ff fe 1e</div>
<div class="a mono hx" style="left:413.5px;top:670px;color:#000000"><span style="color:#9c9c9c">·</span><span style="color:#9c9c9c">·</span><span style="color:#9c9c9c">·</span><span style="color:#9c9c9c">·</span><span style="color:#9c9c9c">·</span><span style="color:#9c9c9c">·</span><span style="color:#9c9c9c">·</span><span style="color:#9c9c9c">·</span> <span style="color:#9c9c9c">·</span><span style="color:#9c9c9c">·</span><span style="color:#9c9c9c">·</span><span style="color:#9c9c9c">·</span><span style="color:#9c9c9c">·</span><span style="color:#9c9c9c">·</span><span style="color:#9c9c9c">·</span><span style="color:#9c9c9c">·</span></div>
<div class="a mono hx" style="left:14px;top:684px;color:#a0a0a0">0080</div>
<div class="a mono hx" style="left:56.5px;top:684px;color:#000000">71 1e ff 02 00 00 00 00  00 00 00 00 00 00 00 00</div>
<div class="a mono hx" style="left:413.5px;top:684px;color:#000000">q<span style="color:#9c9c9c">·</span><span style="color:#9c9c9c">·</span><span style="color:#9c9c9c">·</span><span style="color:#9c9c9c">·</span><span style="color:#9c9c9c">·</span><span style="color:#9c9c9c">·</span><span style="color:#9c9c9c">·</span> <span style="color:#9c9c9c">·</span><span style="color:#9c9c9c">·</span><span style="color:#9c9c9c">·</span><span style="color:#9c9c9c">·</span><span style="color:#9c9c9c">·</span><span style="color:#9c9c9c">·</span><span style="color:#9c9c9c">·</span><span style="color:#9c9c9c">·</span></div>
<div class="a mono hx" style="left:14px;top:698px;color:#a0a0a0">0090</div>
<div class="a mono hx" style="left:56.5px;top:698px;color:#000000">00 fb 14 e9 14 e9 00 af  0b ca 00 00 00 00 00 02</div>
<div class="a mono hx" style="left:413.5px;top:698px;color:#000000"><span style="color:#9c9c9c">·</span><span style="color:#9c9c9c">·</span><span style="color:#9c9c9c">·</span><span style="color:#9c9c9c">·</span><span style="color:#9c9c9c">·</span><span style="color:#9c9c9c">·</span><span style="color:#9c9c9c">·</span><span style="color:#9c9c9c">·</span> <span style="color:#9c9c9c">·</span><span style="color:#9c9c9c">·</span><span style="color:#9c9c9c">·</span><span style="color:#9c9c9c">·</span><span style="color:#9c9c9c">·</span><span style="color:#9c9c9c">·</span><span style="color:#9c9c9c">·</span><span style="color:#9c9c9c">·</span></div>
<div class="a mono hx" style="left:14px;top:712px;color:#a0a0a0">00a0</div>
<div class="a mono hx" style="left:56.5px;top:712px;color:#000000">00 00 00 02 00 00 01 65  01 31 01 31 01 37 01 65</div>
<div class="a mono hx" style="left:413.5px;top:712px;color:#000000"><span style="color:#9c9c9c">·</span><span style="color:#9c9c9c">·</span><span style="color:#9c9c9c">·</span><span style="color:#9c9c9c">·</span><span style="color:#9c9c9c">·</span><span style="color:#9c9c9c">·</span><span style="color:#9c9c9c">·</span>e <span style="color:#9c9c9c">·</span>1<span style="color:#9c9c9c">·</span>1<span style="color:#9c9c9c">·</span>7<span style="color:#9c9c9c">·</span>e</div>
<div class="a mono hx" style="left:14px;top:726px;color:#a0a0a0">00b0</div>
<div class="a mono hx" style="left:56.5px;top:726px;color:#000000">01 31 01 65 01 66 01 66  01 66 01 66 01 63 01 32</div>
<div class="a mono hx" style="left:413.5px;top:726px;color:#000000"><span style="color:#9c9c9c">·</span>1<span style="color:#9c9c9c">·</span>e<span style="color:#9c9c9c">·</span>f<span style="color:#9c9c9c">·</span>f <span style="color:#9c9c9c">·</span>f<span style="color:#9c9c9c">·</span>f<span style="color:#9c9c9c">·</span>c<span style="color:#9c9c9c">·</span>2</div>
<div class="a mono hx" style="left:14px;top:740px;color:#a0a0a0">00c0</div>
<div class="a mono hx" style="left:56.5px;top:740px;color:#000000">01 61 01 30 01 63 01 30  01 30 01 30 01 30 01 30</div>
<div class="a mono hx" style="left:413.5px;top:740px;color:#000000"><span style="color:#9c9c9c">·</span>a<span style="color:#9c9c9c">·</span>0<span style="color:#9c9c9c">·</span>c<span style="color:#9c9c9c">·</span>0 <span style="color:#9c9c9c">·</span>0<span style="color:#9c9c9c">·</span>0<span style="color:#9c9c9c">·</span>0<span style="color:#9c9c9c">·</span>0</div>
<div class="a mono hx" style="left:14px;top:754px;color:#a0a0a0">00d0</div>
<div class="a mono hx" style="left:56.5px;top:754px;color:#000000">01 30 01 30 01 30 01 30  01 30 01 30 01 30 01 30</div>
<div class="a mono hx" style="left:413.5px;top:754px;color:#000000"><span style="color:#9c9c9c">·</span>0<span style="color:#9c9c9c">·</span>0<span style="color:#9c9c9c">·</span>0<span style="color:#9c9c9c">·</span>0 <span style="color:#9c9c9c">·</span>0<span style="color:#9c9c9c">·</span>0<span style="color:#9c9c9c">·</span>0<span style="color:#9c9c9c">·</span>0</div>
<div class="a mono hx" style="left:14px;top:768px;color:#a0a0a0">00e0</div>
<div class="a mono hx" style="left:56.5px;top:768px;color:#000000">01 38 01 65 01 66 03 69  70 36 04 61 72 70 61 00</div>
<div class="a mono hx" style="left:413.5px;top:768px;color:#000000"><span style="color:#9c9c9c">·</span>8<span style="color:#9c9c9c">·</span>e<span style="color:#9c9c9c">·</span>f<span style="color:#9c9c9c">·</span>i p6<span style="color:#9c9c9c">·</span>arpa<span style="color:#9c9c9c">·</span></div>
<div class="a" style="left:1132px;top:572px;width:1px;height:215px;background:#bcbcbc"></div>
<div class="a" style="left:1133px;top:572px;width:13px;height:215px;background:#e3e3e3"></div>
<div class="a" style="left:1133px;top:586px;width:13px;height:118px;background:linear-gradient(90deg,#f2f2f2,#fdfdfd 60%,#f4f4f4);border-top:1px solid #c4c4c4;border-bottom:1px solid #c4c4c4"></div>
<div class="a" style="left:1133px;top:572px;width:13px;height:14px;background:linear-gradient(90deg,#f4f4f4,#fefefe 60%,#f6f6f6);border-bottom:1px solid #c4c4c4"></div>
<svg class="a" style="left:1135px;top:576px" width="9" height="5"><path d="M0.5 4.5H8.5L4.5 0.5Z" fill="#4a4a4a"/></svg>
<div class="a" style="left:1133px;top:773px;width:13px;height:14px;background:linear-gradient(90deg,#f4f4f4,#fefefe 60%,#f6f6f6);border-top:1px solid #c4c4c4"></div>
<svg class="a" style="left:1135px;top:778px" width="9" height="5"><path d="M0.5 0.5H8.5L4.5 4.5Z" fill="#4a4a4a"/></svg>
<svg class="a" style="left:15px;top:791px" width="16" height="16"><defs><radialGradient id="yg" cx="0.4" cy="0.35" r="0.7"><stop offset="0" stop-color="#eeee90"/><stop offset="1" stop-color="#d6d64a"/></radialGradient></defs><circle cx="8" cy="8" r="6.8" fill="url(#yg)" stroke="#5a5a2a" stroke-width="0.9"/></svg>
<svg class="a" style="left:39px;top:791px" width="16" height="16"><rect x="0.5" y="1.5" width="11.5" height="13.5" fill="#f3f3ec" stroke="#d0d0c8"/><rect x="1" y="2" width="9.5" height="3.6" fill="#3d9be0"/><path d="M3.5,5.6 C4,4 5,3 6.5,2.6 C6,3.6 6,4.6 6.2,5.6Z" fill="#fff"/><path d="M2.5,8.5 H9 M2.5,11 H9 M2.5,13 H8" stroke="#d8d8d0" stroke-width="0.8"/><path d="M13.6,2.2 L6.2,10.4" stroke="#3c3c3c" stroke-width="2.6"/><path d="M13.2,1.6 L14.6,3" stroke="#888" stroke-width="1.6"/><path d="M5.2,12.6 L6.1,10.1 L7.6,11.6 Z" fill="#111"/></svg>
<div class="a sans" style="left:69px;top:792px;font-size:13.6px;line-height:16px;color:#111">Linux cooked-mode capture (sll), 16 bytes</div>
<div class="a" style="left:716px;top:792px;width:1px;height:15px;border-left:1px dotted #bbb"></div>
<div class="a sans" style="left:728px;top:792px;font-size:13.6px;line-height:16px;color:#111">Packets: 2287 · Displayed: 2287 (100.0%)</div>
<div class="a" style="left:1016px;top:792px;width:1px;height:15px;border-left:1px dotted #bbb"></div>
<div class="a sans" style="left:1029px;top:792px;font-size:13.6px;line-height:16px;color:#111">Profile: Default</div>
<svg class="a" style="left:568px;top:346px" width="20" height="3"><g fill="#b0b0b0"><rect x="2" y="1" width="1" height="1"/><rect x="5" y="1" width="1" height="1"/><rect x="8" y="1" width="1" height="1"/><rect x="11" y="1" width="1" height="1"/><rect x="14" y="1" width="1" height="1"/><rect x="17" y="1" width="1" height="1"/></g></svg>
<svg class="a" style="left:568px;top:567px" width="20" height="3"><g fill="#b0b0b0"><rect x="2" y="1" width="1" height="1"/><rect x="5" y="1" width="1" height="1"/><rect x="8" y="1" width="1" height="1"/><rect x="11" y="1" width="1" height="1"/><rect x="14" y="1" width="1" height="1"/><rect x="17" y="1" width="1" height="1"/></g></svg>
<svg class="a" style="left:1132px;top:796px" width="14" height="14"><g fill="#b8b8b8"><rect x="11" y="1" width="1.2" height="1.2"/><rect x="8" y="4" width="1.2" height="1.2"/><rect x="11" y="4" width="1.2" height="1.2"/><rect x="5" y="7" width="1.2" height="1.2"/><rect x="8" y="7" width="1.2" height="1.2"/><rect x="11" y="7" width="1.2" height="1.2"/><rect x="2" y="10" width="1.2" height="1.2"/><rect x="5" y="10" width="1.2" height="1.2"/><rect x="8" y="10" width="1.2" height="1.2"/><rect x="11" y="10" width="1.2" height="1.2"/></g></svg></div></body></html>
